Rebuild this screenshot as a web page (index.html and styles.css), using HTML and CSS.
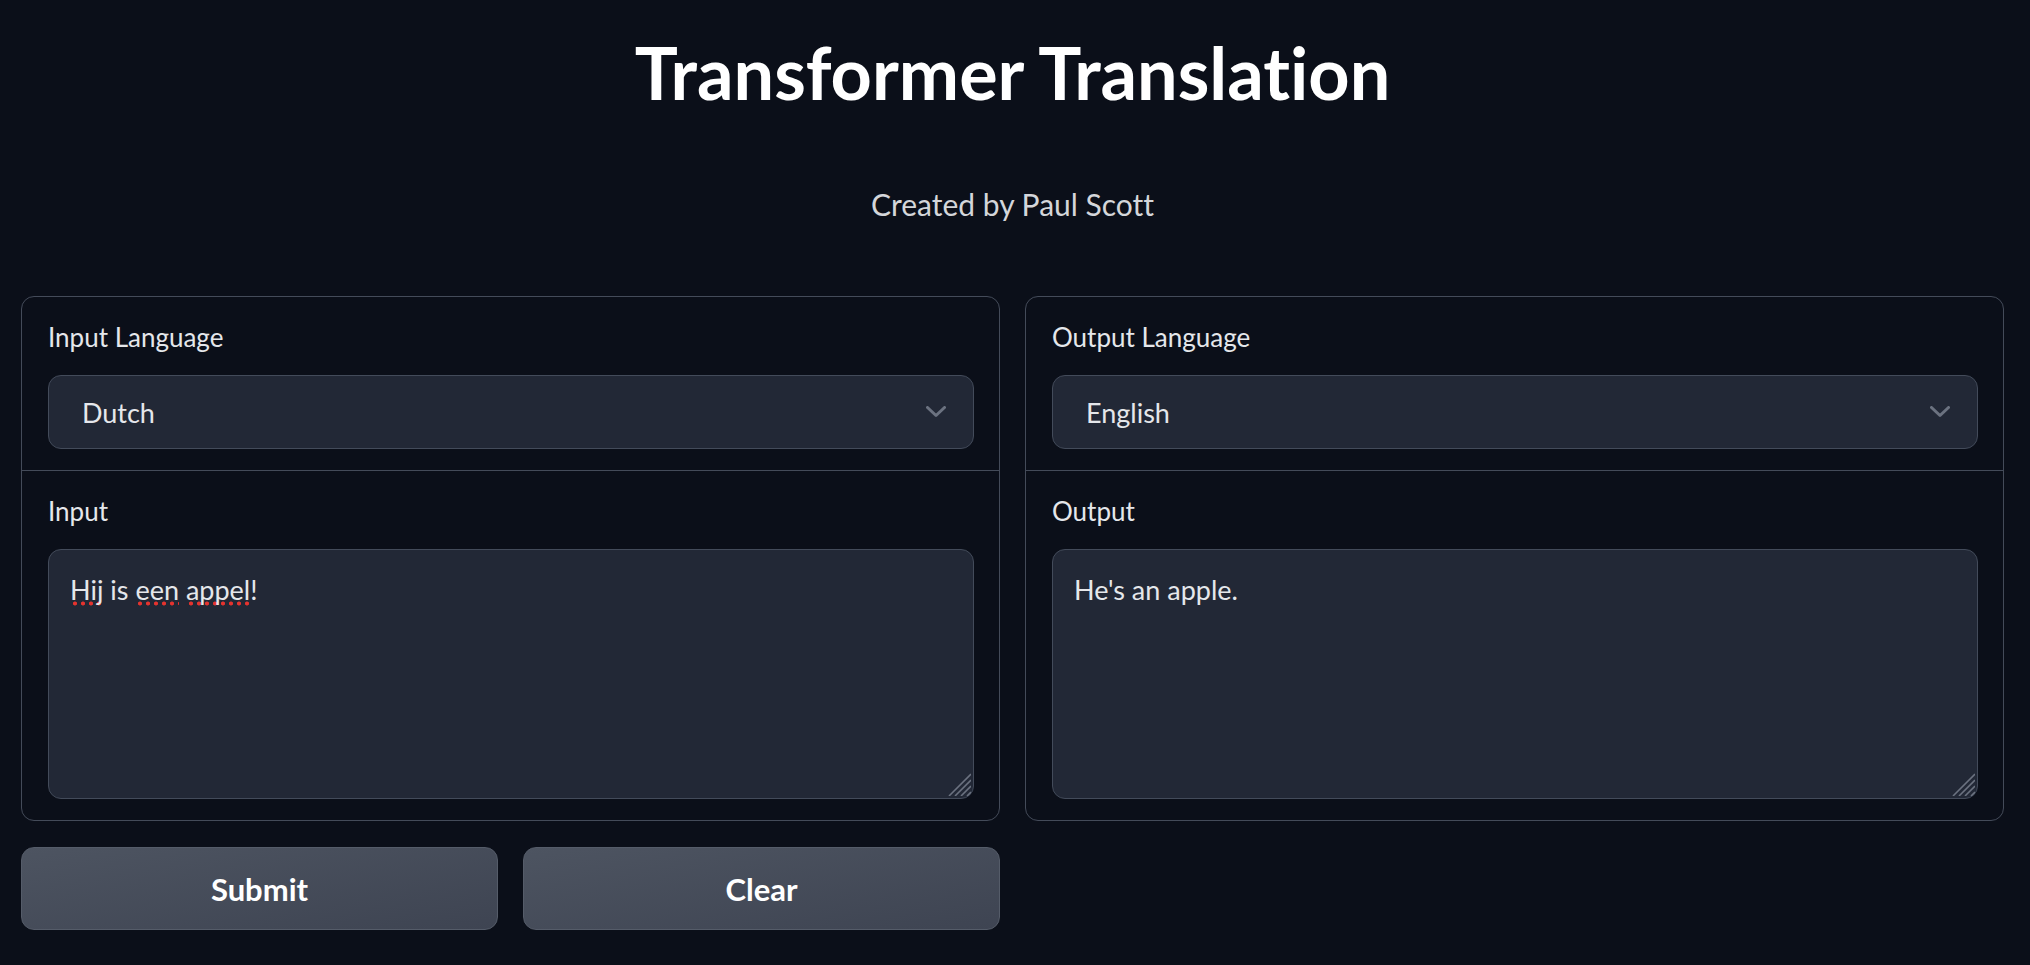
FILE: index.html
```html
<!DOCTYPE html>
<html lang="en">
<head>
<meta charset="utf-8">
<title>Transformer Translation</title>
<link rel="stylesheet" href="styles.css">
</head>
<body>
<div class="app">
  <header class="hero">
    <h1 class="title">Transformer Translation</h1>
    <p class="subtitle">Created by Paul Scott</p>
  </header>
  <div class="row">
    <div class="col">
      <div class="panel">
        <div class="block">
          <div class="label">Input Language</div>
          <div class="select">
            <span class="select-value">Dutch</span>
            <svg class="chevron" width="20" height="12" viewBox="0 0 20 12"><polyline points="1.5,1.5 10,9.5 18.5,1.5" fill="none" stroke="#6b7280" stroke-width="3" stroke-linecap="round" stroke-linejoin="round"/></svg>
          </div>
        </div>
        <div class="block">
          <div class="label">Input</div>
          <div class="textarea">
            <span class="typo">Hij</span> is <span class="typo">een</span> <span class="typo">appel</span>!
            <svg class="resizer" width="24" height="24" viewBox="0 0 24 24"><g stroke="#6b7280" stroke-width="1.6"><line x1="2" y1="24" x2="24" y2="2"/><line x1="8" y1="24" x2="24" y2="8"/><line x1="14" y1="24" x2="24" y2="14"/><line x1="20" y1="24" x2="24" y2="20"/></g></svg>
          </div>
        </div>
      </div>
      <div class="buttons">
        <button class="btn">Submit</button>
        <button class="btn">Clear</button>
      </div>
    </div>
    <div class="col">
      <div class="panel">
        <div class="block">
          <div class="label">Output Language</div>
          <div class="select">
            <span class="select-value">English</span>
            <svg class="chevron" width="20" height="12" viewBox="0 0 20 12"><polyline points="1.5,1.5 10,9.5 18.5,1.5" fill="none" stroke="#6b7280" stroke-width="3" stroke-linecap="round" stroke-linejoin="round"/></svg>
          </div>
        </div>
        <div class="block">
          <div class="label">Output</div>
          <div class="textarea">
            He's an apple.
            <svg class="resizer" width="24" height="24" viewBox="0 0 24 24"><g stroke="#6b7280" stroke-width="1.6"><line x1="2" y1="24" x2="24" y2="2"/><line x1="8" y1="24" x2="24" y2="8"/><line x1="14" y1="24" x2="24" y2="14"/><line x1="20" y1="24" x2="24" y2="20"/></g></svg>
          </div>
        </div>
      </div>
    </div>
  </div>
</div>
</body>
</html>
```

FILE: styles.css
```css
* { box-sizing: border-box; }

html, body {
  margin: 0;
  padding: 0;
  background: #0b0f19;
}

body {
  font-family: Lato, "Noto Sans", "Liberation Sans", sans-serif;
  font-variant-ligatures: none;
  color: #e5e7eb;
}

.app {
  margin-left: 21px;
  width: 1983px;
}

.hero {
  padding-top: 29px;
  text-align: center;
}

.title {
  margin: 0;
  font-size: 72px;
  line-height: 86px;
  font-weight: 700;
  color: #ffffff;
}

.subtitle {
  margin: 71px 0 0;
  font-size: 30px;
  line-height: 36px;
  color: #d4d6da;
}

.row {
  margin-top: 74px;
  display: flex;
  gap: 25px;
  align-items: flex-start;
}

.col {
  flex: 1 1 0;
  display: flex;
  flex-direction: column;
  gap: 26px;
}

.panel {
  border: 1px solid #444b59;
  border-radius: 13px;
  overflow: hidden;
}

.block {
  padding: 24px 25px 21px 26px;
}

.block + .block {
  border-top: 1px solid #444b59;
}

.label {
  font-size: 26px;
  line-height: 32px;
  margin-bottom: 22px;
  color: #e5e7eb;
}

.select {
  height: 74px;
  display: flex;
  align-items: center;
  justify-content: space-between;
  padding: 0 27px 0 33px;
  background: #222836;
  border: 1px solid #434b5a;
  border-radius: 13px;
}

.select-value {
  font-size: 27px;
  color: #e5e7eb;
}

.chevron {
  display: block;
}

.textarea {
  position: relative;
  height: 250px;
  padding: 20px 21px;
  background: #222836;
  border: 1px solid #434b5a;
  border-radius: 13px;
  font-size: 27px;
  line-height: 40px;
  color: #e5e7eb;
}

.typo {
  background-image: radial-gradient(circle, #e5332e 1.7px, rgba(229, 51, 46, 0) 2.3px);
  background-repeat: repeat-x;
  background-position: 1px 100%;
  background-size: 8px 5px;
}

.resizer {
  position: absolute;
  right: 2px;
  bottom: 2px;
}

.buttons {
  display: flex;
  gap: 25px;
}

.btn {
  flex: 1 1 0;
  height: 83px;
  border: 1px solid #555c69;
  border-radius: 13px;
  background: linear-gradient(to bottom right, #4d5461, #3e4452);
  color: #ffffff;
  font-family: Lato, "Noto Sans", "Liberation Sans", sans-serif;
  font-variant-ligatures: none;
  font-size: 31px;
  font-weight: 700;
  cursor: pointer;
}
```
